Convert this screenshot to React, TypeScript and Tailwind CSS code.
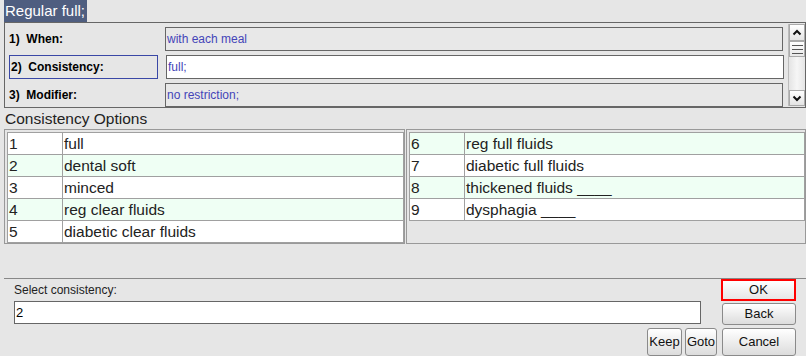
import React from 'react'

const font = "font-['Liberation_Sans',Arial,sans-serif]"

const options = [
  { no: 1, label: 'full' },
  { no: 2, label: 'dental soft' },
  { no: 3, label: 'minced' },
  { no: 4, label: 'reg clear fluids' },
  { no: 5, label: 'diabetic clear fluids' },
  { no: 6, label: 'reg full fluids' },
  { no: 7, label: 'diabetic full fluids' },
  { no: 8, label: 'thickened fluids ____' },
  { no: 9, label: 'dysphagia ____' },
]

const fields = [
  { label: '1)  When:', value: 'with each meal', active: false },
  { label: '2)  Consistency:', value: 'full;', active: true },
  { label: '3)  Modifier:', value: 'no restriction;', active: false },
]

function Chevron({ up }: { up?: boolean }) {
  return (
    <svg width="10" height="7" viewBox="0 0 10 7" className={up ? '' : 'rotate-180'}>
      <path d="M1.5 5.5 L5 2 L8.5 5.5" fill="none" stroke="#111" strokeWidth={2} />
    </svg>
  )
}

function OptionTable({ rows }: { rows: typeof options }) {
  return (
    <div className="border-l border-t border-[#a0a0a0]">
      {rows.map((o) => (
        <div
          key={o.no}
          className={`flex h-[22px] items-center border-b border-[#a0a0a0] text-[15.5px] text-[#222] ${
            o.no % 2 === 0 ? 'bg-[#effff4]' : 'bg-white'
          }`}
        >
          <div className="w-[55px] h-full flex items-center pl-[1px] border-r border-[#a0a0a0]">{o.no}</div>
          <div className="flex-1 h-full flex items-center pl-[1px] border-r border-[#a0a0a0]">{o.label}</div>
        </div>
      ))}
    </div>
  )
}

function Button({ children, className = '' }: { children: React.ReactNode; className?: string }) {
  return (
    <button
      className={`flex items-center justify-center rounded-[3px] border border-[#8a8a8a] bg-gradient-to-b from-white to-[#dcdcdc] text-[13px] text-[#111] ${className}`}
    >
      {children}
    </button>
  )
}

export default function App() {
  return (
    <div className={`w-[806px] h-[356px] bg-[#e6e6e6] flex flex-col overflow-hidden ${font}`}>
      {/* Title */}
      <div className="h-[22px] pl-[4px] flex">
        <span className="bg-[#4f5e80] text-white text-[15px] leading-[22px] pl-[1px] pr-[2px]">Regular full;</span>
      </div>

      {/* Order fields */}
      <div className="ml-[4px] w-[802px] h-[87px] border border-[#666] flex">
        <div className="flex-1 flex flex-col gap-[4px] pt-[4px] pl-[4px]">
          {fields.map((f) => (
            <div key={f.label} className="flex items-center h-[24px]">
              <div
                className={`w-[149px] h-full flex items-center text-[12px] font-bold text-black border ${
                  f.active ? 'border-[#3a48a6] pl-[1px]' : 'border-transparent -ml-[1px]'
                }`}
              >
                {f.label.split('  ').join('\u00a0 ')}
              </div>
              <div
                className={`ml-[8px] w-[618px] h-full border border-[#666] flex items-center pl-[1px] text-[12px] text-[#4444b8] ${
                  f.active ? 'bg-white' : 'bg-[#e8e8e8]'
                }`}
              >
                {f.value}
              </div>
            </div>
          ))}
        </div>
        <div className="w-[17px] my-[1px] flex flex-col border-l border-[#bbb]">
          <div className="h-[17px] flex items-center justify-center border border-[#aaa] bg-gradient-to-b from-white to-[#e4e4e4]">
            <Chevron up />
          </div>
          <div className="h-[16px] flex flex-col items-center justify-center gap-[3px] border border-[#aaa] bg-gradient-to-b from-white to-[#e8e8e8]">
            <div className="w-[11px] h-px bg-[#555]" />
            <div className="w-[11px] h-px bg-[#555]" />
            <div className="w-[11px] h-px bg-[#555]" />
          </div>
          <div className="flex-1 bg-gradient-to-r from-[#e4e4e4] via-[#f6f6f6] to-[#e4e4e4]" />
          <div className="h-[16px] flex items-center justify-center border border-[#aaa] bg-gradient-to-b from-white to-[#e4e4e4]">
            <Chevron />
          </div>
        </div>
      </div>

      {/* Options */}
      <div className="h-[21px] pl-[5px] flex items-center text-[15.5px] text-[#222]">Consistency Options</div>
      <div className="flex h-[115px]">
        <div className="ml-[4px] w-[401px] h-full border border-[#999] pl-[2px] pt-[2px]">
          <OptionTable rows={options.slice(0, 5)} />
        </div>
        <div className="ml-[1px] w-[400px] h-full border border-[#999] pl-[2px] pt-[2px]">
          <OptionTable rows={options.slice(5)} />
        </div>
      </div>

      {/* Selection */}
      <div className="mt-[34px] ml-[4px] border-t border-[#888] flex-1 flex flex-col">
        <div className="flex">
          <div className="flex-1 pl-[10px] pt-[4px]">
            <div className="text-[12px] text-[#222] leading-[14px]">Select consistency:</div>
            <div className="mt-[4px] w-[687px] h-[23px] border border-[#666] bg-white flex items-center pl-[1px] text-[13px] text-black">
              2
            </div>
          </div>
          <div className="w-[75px] mr-[10px] flex flex-col gap-[2px] pt-[0px]">
            <button className="h-[22px] border-2 border-[#ff0000] bg-gradient-to-b from-white to-[#e6e6e6] text-[13px] text-[#111] flex items-center justify-center">
              OK
            </button>
            <Button className="ml-[1px] h-[22px]">Back</Button>
          </div>
        </div>
        <div className="flex justify-end gap-[3px] mt-[3px] mr-[10px]">
          <Button className="w-[35px] h-[28px]">Keep</Button>
          <Button className="w-[32px] h-[28px]">Goto</Button>
          <Button className="w-[74px] h-[28px] ml-[2px]">Cancel</Button>
        </div>
      </div>
    </div>
  )
}
